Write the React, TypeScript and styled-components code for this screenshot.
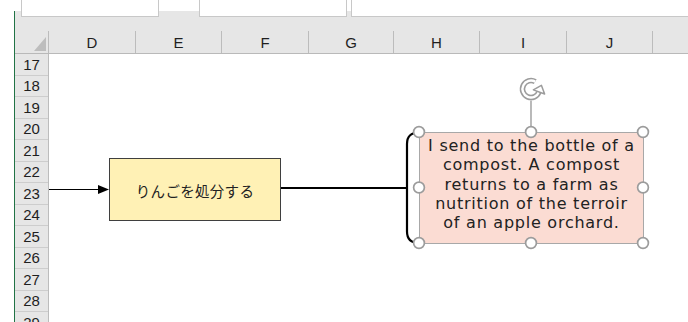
import React from "react";
import styled, { createGlobalStyle } from "styled-components";

const Global = createGlobalStyle`
  html, body { margin: 0; padding: 0; background: #ffffff; }
  body { width: 688px; height: 322px; overflow: hidden; }
`;

const Frame = styled.div`
  width: 688px;
  height: 322px;
  display: flex;
  overflow: hidden;
  background: #ffffff;
  font-family: "Liberation Sans", Arial, sans-serif;
  color: #222222;
`;

const Gutter = styled.div`
  width: 15px;
  flex: none;
  background:
    linear-gradient(#ffffff 0 11px, transparent 11px),
    linear-gradient(90deg, #ffffff 0 14px, #217346 14px);
`;

const Workbook = styled.div`
  flex: 1;
  min-width: 0;
  display: flex;
  flex-direction: column;
`;

const TopBar = styled.div`
  height: 17px;
  flex: none;
  display: flex;
  align-items: flex-start;
  padding-left: 6px;
  background: linear-gradient(#ffffff 0 11px, #e6e6e6 11px);
`;

const Field = styled.div<{ $w?: number; $gap?: number }>`
  height: 17px;
  box-sizing: border-box;
  background: #ffffff;
  border: 1px solid #c8c8c8;
  border-top: none;
  width: ${(p) => (p.$w ? `${p.$w}px` : "auto")};
  flex: ${(p) => (p.$w ? "none" : "1")};
  margin-left: ${(p) => p.$gap ?? 0}px;
  ${(p) => (p.$w ? "" : "border-right: none;")}
`;

const HeaderBand = styled.div`
  height: 37px;
  flex: none;
  box-sizing: border-box;
  display: flex;
  align-items: flex-end;
  background: #e6e6e6;
  border-bottom: 1px solid #b9b9b9;
`;

const Corner = styled.div`
  width: 34px;
  height: 22px;
  flex: none;
  box-sizing: border-box;
  border-right: 1px solid #bcbcbc;
  display: flex;
  align-items: flex-end;
  justify-content: flex-end;
  padding: 0 2px 2px 0;
`;

const SelectAll = styled.div`
  width: 0;
  height: 0;
  border-left: 12px solid transparent;
  border-bottom: 14px solid #bdbdbd;
`;

const ColCell = styled.div<{ $w?: number }>`
  width: ${(p) => (p.$w ? `${p.$w}px` : "auto")};
  flex: ${(p) => (p.$w ? "none" : "1")};
  height: 22px;
  box-sizing: border-box;
  border-right: ${(p) => (p.$w ? "1px solid #bcbcbc" : "none")};
  display: flex;
  align-items: center;
  justify-content: center;
  font-size: 15px;
  color: #1f1f1f;
`;

const Body = styled.div`
  flex: 1;
  min-height: 0;
  display: flex;
`;

const RowHeader = styled.div`
  width: 34px;
  flex: none;
  box-sizing: border-box;
  background: #e6e6e6;
  border-right: 1px solid #bcbcbc;
  display: flex;
  flex-direction: column;
`;

const RowCell = styled.div`
  height: 21.5px;
  flex: none;
  box-sizing: border-box;
  border-bottom: 1px solid #cdcdcd;
  display: flex;
  align-items: center;
  justify-content: center;
  font-size: 15px;
  color: #1f1f1f;
`;

const Sheet = styled.div`
  flex: 1;
  position: relative;
  background: #ffffff;
  overflow: hidden;
`;

const ProcessBox = styled.div`
  position: absolute;
  left: 60px;
  top: 104px;
  width: 172px;
  height: 63px;
  box-sizing: border-box;
  background: #fff1b5;
  border: 1px solid #3f3f3f;
  display: flex;
  align-items: center;
  justify-content: center;
  font-family: "Noto Sans CJK JP", "Noto Sans", sans-serif;
  font-size: 14.5px;
  letter-spacing: 0.3px;
  color: #222222;
  padding-top: 2px;
`;

const NoteBox = styled.div`
  position: absolute;
  left: 370px;
  top: 78px;
  width: 225px;
  height: 112px;
  box-sizing: border-box;
  background: #fbdcd3;
  border: 1px solid #a8a8a8;
  padding-top: 3px;
  display: flex;
  flex-direction: column;
  align-items: center;
  font-family: "DejaVu Sans", Verdana, sans-serif;
  font-size: 16px;
  letter-spacing: 0.75px;
  line-height: 19.3px;
  color: #222222;
  white-space: nowrap;
`;

const NoteLine = styled.span`
  display: block;
`;

const Overlay = styled.svg`
  position: absolute;
  left: 0;
  top: 0;
  width: 100%;
  height: 100%;
  overflow: visible;
  pointer-events: none;
`;

const columns: { label: string; w?: number }[] = [
  { label: "D", w: 87 },
  { label: "E", w: 86 },
  { label: "F", w: 87 },
  { label: "G", w: 85 },
  { label: "H", w: 86 },
  { label: "I", w: 87 },
  { label: "J", w: 86 },
  { label: "" },
];

const rows = Array.from({ length: 13 }, (_, i) => 17 + i);

const noteLines = [
  "I send to the bottle of a",
  "compost. A compost",
  "returns to a farm as",
  "nutrition of the terroir",
  "of an apple orchard.",
];

const handleXs = [370, 482, 594];
const handleYs = [78, 133.5, 189];

function Handles() {
  const pts: [number, number][] = [];
  handleYs.forEach((y, yi) =>
    handleXs.forEach((x, xi) => {
      if (yi === 1 && xi === 1) return;
      pts.push([x, y]);
    })
  );
  return (
    <g>
      {pts.map(([x, y], i) => (
        <circle key={i} cx={x} cy={y} r={5.4} fill="#ffffff" stroke="#9c9c9c" strokeWidth={1.7} />
      ))}
    </g>
  );
}

function RotateHandle() {
  const cx = 482;
  const cy = 35;
  const r = 8.5;
  const a0 = (-60 * Math.PI) / 180;
  const a1 = (20 * Math.PI) / 180;
  const sx = cx + r * Math.cos(a0);
  const sy = cy + r * Math.sin(a0);
  const ex = cx + r * Math.cos(a1);
  const ey = cy + r * Math.sin(a1);
  const nx = Math.cos(a1);
  const ny = Math.sin(a1);
  const tx = Math.sin(a1);
  const ty = -Math.cos(a1);
  const head = [
    [ex + nx * 6, ey + ny * 6],
    [ex - nx * 6, ey - ny * 6],
    [ex + tx * 7, ey + ty * 7],
  ]
    .map((p) => p.join(","))
    .join(" ");
  const d = `M ${sx} ${sy} A ${r} ${r} 0 1 0 ${ex} ${ey}`;
  return (
    <g>
      <line x1={cx} y1={46.5} x2={cx} y2={72.6} stroke="#9c9c9c" strokeWidth={1.4} />
      <path d={d} fill="none" stroke="#9c9c9c" strokeWidth={5.6} />
      <path d={d} fill="none" stroke="#ffffff" strokeWidth={2.4} />
      <polygon points={head} fill="#ffffff" stroke="#9c9c9c" strokeWidth={1.5} strokeLinejoin="round" />
    </g>
  );
}

export default function App() {
  return (
    <>
      <Global />
      <Frame>
        <Gutter />
        <Workbook>
          <TopBar>
            <Field $w={138} />
            <Field $w={148} $gap={40} />
            <Field $gap={4} />
          </TopBar>
          <HeaderBand>
            <Corner>
              <SelectAll />
            </Corner>
            {columns.map((c, i) => (
              <ColCell key={i} $w={c.w}>
                {c.label}
              </ColCell>
            ))}
          </HeaderBand>
          <Body>
            <RowHeader>
              {rows.map((r) => (
                <RowCell key={r}>{r}</RowCell>
              ))}
            </RowHeader>
            <Sheet>
              <ProcessBox>りんごを処分する</ProcessBox>
              <NoteBox>
                {noteLines.map((l) => (
                  <NoteLine key={l}>{l}</NoteLine>
                ))}
              </NoteBox>
              <Overlay>
                <line x1={0} y1={135.5} x2={50} y2={135.5} stroke="#000000" strokeWidth={1.2} />
                <polygon points="49,131 60,135.5 49,140" fill="#000000" />
                <line x1={232} y1={134} x2={358} y2={134} stroke="#000000" strokeWidth={2.2} />
                <path
                  d="M 370 78.5 Q 358 78.5 358 90 L 358 177.5 Q 358 189 370 189"
                  fill="none"
                  stroke="#000000"
                  strokeWidth={2.2}
                />
                <Handles />
                <RotateHandle />
              </Overlay>
            </Sheet>
          </Body>
        </Workbook>
      </Frame>
    </>
  );
}
